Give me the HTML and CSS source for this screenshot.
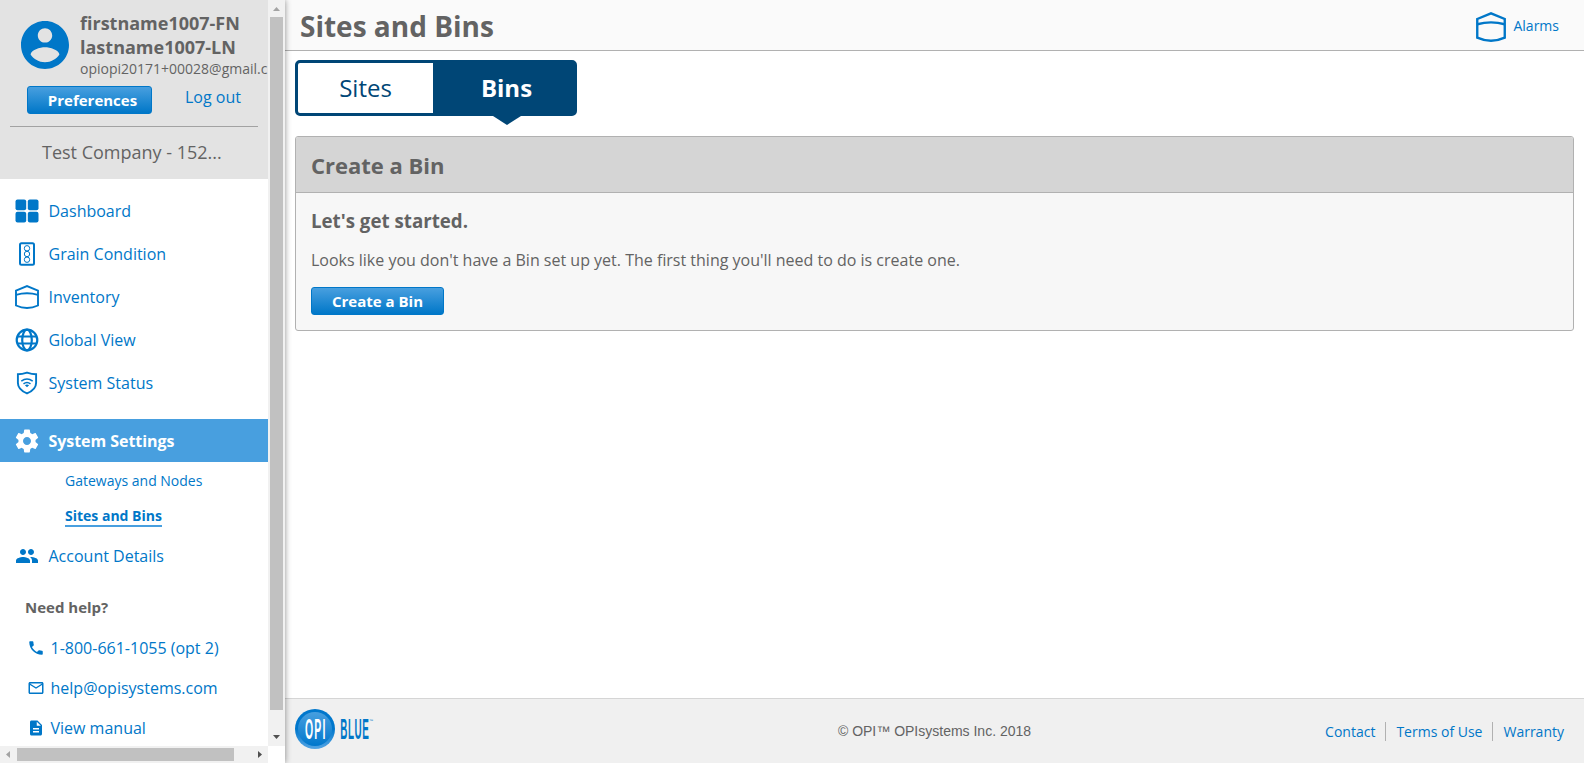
FILE: index.html
```html
<!DOCTYPE html>
<html lang="en">
<head>
<meta charset="utf-8">
<title>Sites and Bins</title>
<link rel="stylesheet" href="styles.css">
</head>
<body>
<svg class="defs" aria-hidden="true">
  <symbol id="bin" viewBox="0 0 24 24"><g fill="none" stroke="currentColor" stroke-width="1.900"><path d="M1 5.600 12 1.100l11 4.500V20.500Q12 25.500 1 20.500Z"/><path d="M1 9.800Q12 6.800 23 9.800"/></g></symbol>
</svg>
<div class="app">
  <aside class="sidebar">
    <div class="side-row">
      <div class="side-content">
        <header class="profile">
          <div class="user">
            <svg class="avatar" viewBox="2 2 20 20"><path fill="currentColor" d="M12 2C6.480 2 2 6.480 2 12s4.480 10 10 10 10-4.480 10-10S17.520 2 12 2zm0 3c1.660 0 3 1.340 3 3s-1.340 3-3 3-3-1.340-3-3 1.340-3 3-3zm0 14.200c-2.500 0-4.710-1.280-6-3.220.03-1.990 4-3.080 6-3.080 1.990 0 5.970 1.090 6 3.080-1.290 1.940-3.500 3.220-6 3.220z"/></svg>
            <div class="user-text">
              <strong>firstname1007-FN<br>lastname1007-LN</strong>
              <span>opiopi20171+00028@gmail.c</span>
            </div>
          </div>
          <div class="user-actions"><a class="button prefs">Preferences</a><a class="logout">Log out</a></div>
          <div class="company">Test Company - 152...</div>
        </header>
        <nav class="nav">
          <a><svg viewBox="0 0 24 24"><g fill="currentColor"><rect x=".5" y=".5" width="10.700" height="10.700" rx="2"/><rect x="12.800" y=".5" width="10.700" height="10.700" rx="2"/><rect x=".5" y="12.800" width="10.700" height="10.700" rx="2"/><rect x="12.800" y="12.800" width="10.700" height="10.700" rx="2"/></g></svg>Dashboard</a>
          <a><svg viewBox="0 0 24 24"><g fill="none" stroke="currentColor"><rect x="5" y="1.300" width="14" height="21.400" rx="1.500" stroke-width="2"/><circle cx="12" cy="6.300" r="2.700"/><circle cx="12" cy="12" r="2.700"/><circle cx="12" cy="17.700" r="2.700"/></g></svg>Grain Condition</a>
          <a><svg viewBox="0 0 24 24"><use href="#bin"/></svg>Inventory</a>
          <a><svg viewBox="0 0 24 24"><g fill="none" stroke="currentColor" stroke-width="2.200"><circle cx="12" cy="12" r="10.300"/><ellipse cx="12" cy="12" rx="4.800" ry="10.300"/><path d="M2.500 8.500h19M2.500 15.500h19"/></g></svg>Global View</a>
          <a><svg viewBox="0 0 24 24"><path fill="none" stroke="currentColor" stroke-width="1.900" d="M12 1.600Q7 3.200 2.900 3.300V12c0 5.500 4.500 8.500 9.100 10.400 4.600-1.900 9.100-4.900 9.100-10.400V3.300Q17 3.200 12 1.600Z"/><g fill="none" stroke="currentColor" stroke-width="1.500"><path d="M6.300 10.200q5.700-4.500 11.400 0M8.500 12.900q3.500-2.800 7 0"/></g><path fill="currentColor" d="M9.900 14.200q2.100-1.200 4.200 0L12 16.300z"/></svg>System Status</a>
          <a class="active"><svg viewBox="1.500 1.500 21 21"><path fill="currentColor" d="M19.430 12.980c.04-.32.070-.64.070-.98s-.03-.66-.07-.98l2.110-1.650c.19-.15.240-.42.120-.64l-2-3.460c-.12-.22-.39-.3-.61-.22l-2.490 1c-.52-.4-1.080-.73-1.690-.98l-.38-2.650C14.460 2.180 14.250 2 14 2h-4c-.25 0-.46.180-.49.420l-.38 2.650c-.61.250-1.170.590-1.690.980l-2.490-1c-.23-.09-.49 0-.61.220l-2 3.460c-.13.220-.07.490.120.640l2.110 1.650c-.04.320-.07.650-.07.980s.030.660.070.980l-2.110 1.650c-.19.150-.24.420-.12.640l2 3.460c.12.220.390.300.610.220l2.490-1c.52.400 1.080.730 1.690.980l.38 2.650c.03.240.240.420.490.420h4c.25 0 .46-.18.490-.42l.38-2.650c.61-.25 1.170-.59 1.690-.98l2.490 1c.23.090.490 0 .61-.22l2-3.460c.12-.22.070-.49-.12-.64l-2.110-1.650zM12 15.500c-1.930 0-3.500-1.570-3.500-3.500s1.570-3.500 3.500-3.500 3.500 1.570 3.500 3.500-1.570 3.500-3.500 3.500z"/></svg>System Settings</a>
          <div class="subnav"><a>Gateways and Nodes</a><a class="current">Sites and Bins</a></div>
          <a class="account"><svg viewBox="0 0 24 24"><path fill="currentColor" d="M16 11c1.660 0 2.990-1.340 2.990-3S17.660 5 16 5s-3 1.340-3 3 1.340 3 3 3zm-8 0c1.660 0 2.990-1.340 2.990-3S9.660 5 8 5 5 6.340 5 8s1.340 3 3 3zm0 2c-2.330 0-7 1.170-7 3.500V19h14v-2.500C15 14.170 10.330 13 8 13zm8 0c-.29 0-.62.020-.97.050C16.190 13.890 17 15.020 17 16.500V19h6v-2.500c0-2.330-4.670-3.500-7-3.500z"/></svg>Account Details</a>
        </nav>
        <section class="help">
          <h2>Need help?</h2>
          <a><svg viewBox="0 0 24 24"><path fill="currentColor" d="M6.620 10.790c1.440 2.830 3.760 5.140 6.590 6.590l2.200-2.200c.27-.27.670-.36 1.020-.24 1.120.370 2.330.570 3.570.570.550 0 1 .45 1 1V20c0 .55-.45 1-1 1C10.610 21 3 13.390 3 4c0-.55.450-1 1-1h3.500c.55 0 1 .45 1 1 0 1.250.200 2.450.570 3.570.110.350.030.740-.25 1.020l-2.200 2.200z"/></svg>1-800-661-1055 (opt 2)</a>
          <a><svg viewBox="0 0 24 24"><path fill="currentColor" d="M20 4H4c-1.100 0-2 .9-2 2v12c0 1.100.9 2 2 2h16c1.100 0 2-.9 2-2V6c0-1.100-.9-2-2-2zm0 14H4V8l8 5 8-5v10zm-8-7L4 6h16l-8 5z"/></svg>help@opisystems.com</a>
          <a><svg viewBox="0 0 24 24"><path fill="currentColor" d="M14 2H6c-1.100 0-2 .9-2 2v16c0 1.100.9 2 2 2h12c1.100 0 2-.9 2-2V8l-6-6zm2 16H8v-2h8v2zm0-4H8v-2h8v2zm-3-5V3.500L18.500 9H13z"/></svg>View manual</a>
        </section>
      </div>
      <div class="vscroll"><svg viewBox="0 0 17 17"><path fill="#a3a3a3" d="M5 11 8.500 7 12 11z"/></svg><i></i><svg viewBox="0 0 17 17"><path fill="#505050" d="M5 6h7L8.500 10z"/></svg></div>
    </div>
    <div class="hscroll"><svg viewBox="0 0 17 17"><path fill="#a3a3a3" d="M10 5v7L6 8.500z"/></svg><i></i><svg viewBox="0 0 17 17"><path fill="#505050" d="M7 5v7l4-3.500z"/></svg></div>
  </aside>
  <div class="page">
    <header class="topbar"><h1>Sites and Bins</h1><a class="alarms"><svg viewBox="0 0 24 24"><use href="#bin"/></svg>Alarms</a></header>
    <main>
      <div class="tabs"><a>Sites</a><a class="selected">Bins</a></div>
      <section class="panel">
        <h2>Create a Bin</h2>
        <div class="panel-body"><h3>Let's get started.</h3><p>Looks like you don't have a Bin set up yet. The first thing you'll need to do is create one.</p><a class="button create">Create a Bin</a></div>
      </section>
    </main>
    <footer>
      <svg class="logo" viewBox="0 0 80 40">
        <defs><linearGradient id="rim" x2="0" y2="1"><stop stop-color="#0077cc"/><stop offset=".5" stop-color="#0077cc"/><stop offset="1" stop-color="#55a5e4"/></linearGradient><linearGradient id="disc" x2="0" y2="1"><stop stop-color="#489fdf"/><stop offset="1" stop-color="#0077cc"/></linearGradient></defs>
        <circle cx="20" cy="20" r="20" fill="url(#rim)"/><circle cx="20" cy="20" r="17" fill="url(#disc)"/>
        <text class="logo-opi" transform="translate(9.900 30) scale(.36 1)" textLength="57" lengthAdjust="spacing">OPI</text>
        <text class="logo-blue" transform="translate(45.300 30) scale(.34 1)" textLength="84" lengthAdjust="spacing">BLUE</text>
        <text class="logo-tm" x="74" y="13">™</text>
      </svg>
      <span class="copyright">© OPI™ OPIsystems Inc. 2018</span>
      <div class="links"><a>Contact</a><a>Terms of Use</a><a>Warranty</a></div>
    </footer>
  </div>
</div>
</body>
</html>
```
FILE: styles.css
```css
* { box-sizing: border-box; }
body { margin: 0; font-family: "Open Sans", sans-serif; font-size: 16px; color: #636363; background: #fff; }
h1, h2, h3, p { margin: 0; }
a { color: #0077c8; text-decoration: none; }
svg { display: block; flex: none; }
.defs { position: absolute; width: 0; height: 0; }
.app { display: flex; width: 100%; height: 763px; overflow: hidden; }

.sidebar { flex: none; width: 285px; background: #fff; box-shadow: 0 0 6px rgba(0,0,0,.45); z-index: 1; }
.side-row { display: flex; height: 746px; }
.side-content { width: 268px; overflow: hidden; }
.profile { height: 179px; background: #e3e3e3; padding-top: 11px; }
.user { display: flex; height: 75px; padding-left: 21px; }
.avatar { width: 48px; height: 48px; margin: 10px 11px 0 0; color: #0077c8; }
.user-text { line-height: 24px; }
.user-text strong { display: block; font-size: 18px; white-space: nowrap; }
.user-text span { display: block; font-size: 14px; line-height: 20px; white-space: nowrap; }
.button { display: block; height: 28px; border: 1px solid #0077c8; border-radius: 3px; background: linear-gradient(#489fdf, #0077c8); color: #fff; font-size: 15px; font-weight: 700; line-height: 27px; text-align: center; }
.prefs { width: 125px; padding-left: 6px; }
.user-actions { display: flex; height: 41px; margin: 0 10px; padding-left: 17px; border-bottom: 1px solid #a2a2a2; }
.logout { margin-left: 33px; line-height: 23px; }
.company { padding-left: 42px; font-size: 18px; line-height: 50px; }
.nav { padding-top: 10px; }
.nav > a { display: flex; align-items: center; height: 43px; padding-left: 15px; gap: 9.5px; }
.nav > a > svg { width: 24px; height: 24px; }
.nav > .active { margin-top: 15px; background: #489fdf; color: #fff; font-weight: 700; letter-spacing: -.05px; }
.subnav { display: flex; flex-direction: column; align-items: flex-start; padding: 9px 0 0 65px; height: 72px; font-size: 14px; line-height: 20px; }
.subnav .current { margin-top: 15px; font-weight: 700; border-bottom: 2px solid #489fdf; line-height: 19px; }
.help { padding: 19px 0 0 25px; }
.help h2 { font-size: 15px; line-height: 22px; }
.help a { display: flex; align-items: center; gap: 6.5px; height: 40px; padding-left: 1.5px; }
.help h2 + a { margin-top: 10px; }
.help svg { width: 18px; height: 18px; margin-right: -.5px; }
.vscroll { width: 17px; display: flex; flex-direction: column; background: #f1f1f1; }
.vscroll svg, .hscroll svg { width: 17px; height: 17px; }
.vscroll i { width: 13px; height: 693px; margin: 0 2px 19px; background: #c1c1c1; }
.hscroll { display: flex; width: 268px; height: 17px; background: #f1f1f1; }
.hscroll i { width: 217px; height: 13px; margin: 2px 17px 2px 0; background: #c1c1c1; }

.page { display: flex; flex: 1; flex-direction: column; min-width: 0; }
.topbar { display: flex; justify-content: space-between; align-items: center; height: 51px; padding: 0 25px 0 15px; background: #fafafa; border-bottom: 1px solid #b1b1b1; }
h1 { padding-top: 2px; font-size: 28px; line-height: 50px; }
.alarms { display: flex; align-items: center; gap: 7px; font-size: 14px; padding-top: 2px; line-height: 20px; }
.alarms svg { width: 30px; height: 30px; margin-top: 2px; }
main { flex: 1; padding: 9px 10px 0; }
.tabs { display: flex; width: 282px; height: 56px; border: 3px solid #004676; border-radius: 5px; background: #fff; font-size: 24px; line-height: 50px; text-align: center; }
.tabs a { position: relative; width: 135px; color: #004676; }
.tabs .selected { width: 141px; padding-left: 6px; background: #004676; color: #fff; font-weight: 700; }
.selected::after { content: ""; position: absolute; left: 60px; top: 53px; border: 14px solid transparent; border-top: 9px solid #004676; border-bottom: 0; }
.panel { height: 195px; margin-top: 20px; border: 1px solid #b1b1b1; border-radius: 3px; background: #f7f7f7; overflow: hidden; }
.panel h2 { height: 56px; padding-left: 15px; border-bottom: 1px solid #b1b1b1; background: #d5d5d5; font-size: 22px; line-height: 56px; }
.panel-body { padding: 14px 15px; }
h3 { font-size: 18.72px; line-height: 28px; }
.panel p { margin-top: 13px; line-height: 24px; }
.create { width: 133px; margin-top: 15px; }
footer { display: grid; grid-template-columns: 1fr auto 1fr; align-items: center; height: 65px; padding: 0 20px 0 10px; border-top: 1px solid #d5d5d5; background: #f0f0f0; }
.logo { width: 80px; height: 40px; margin-top: -4px; }
.logo-opi, .logo-blue { font-family: "Liberation Sans", sans-serif; font-size: 29px; font-weight: 700; fill: #fff; }
.logo-blue { fill: #0077c8; }
.logo-tm { font-family: "Liberation Sans", sans-serif; font-size: 4px; fill: #0077c8; }
.copyright { padding-left: 10px; font: 14px/20px "Liberation Sans", sans-serif; }
.links { display: flex; justify-content: flex-end; font-size: 14px; line-height: 19px; }
.links a + a { margin-left: 10px; padding-left: 10px; border-left: 1px solid #b1b1b1; }
```
